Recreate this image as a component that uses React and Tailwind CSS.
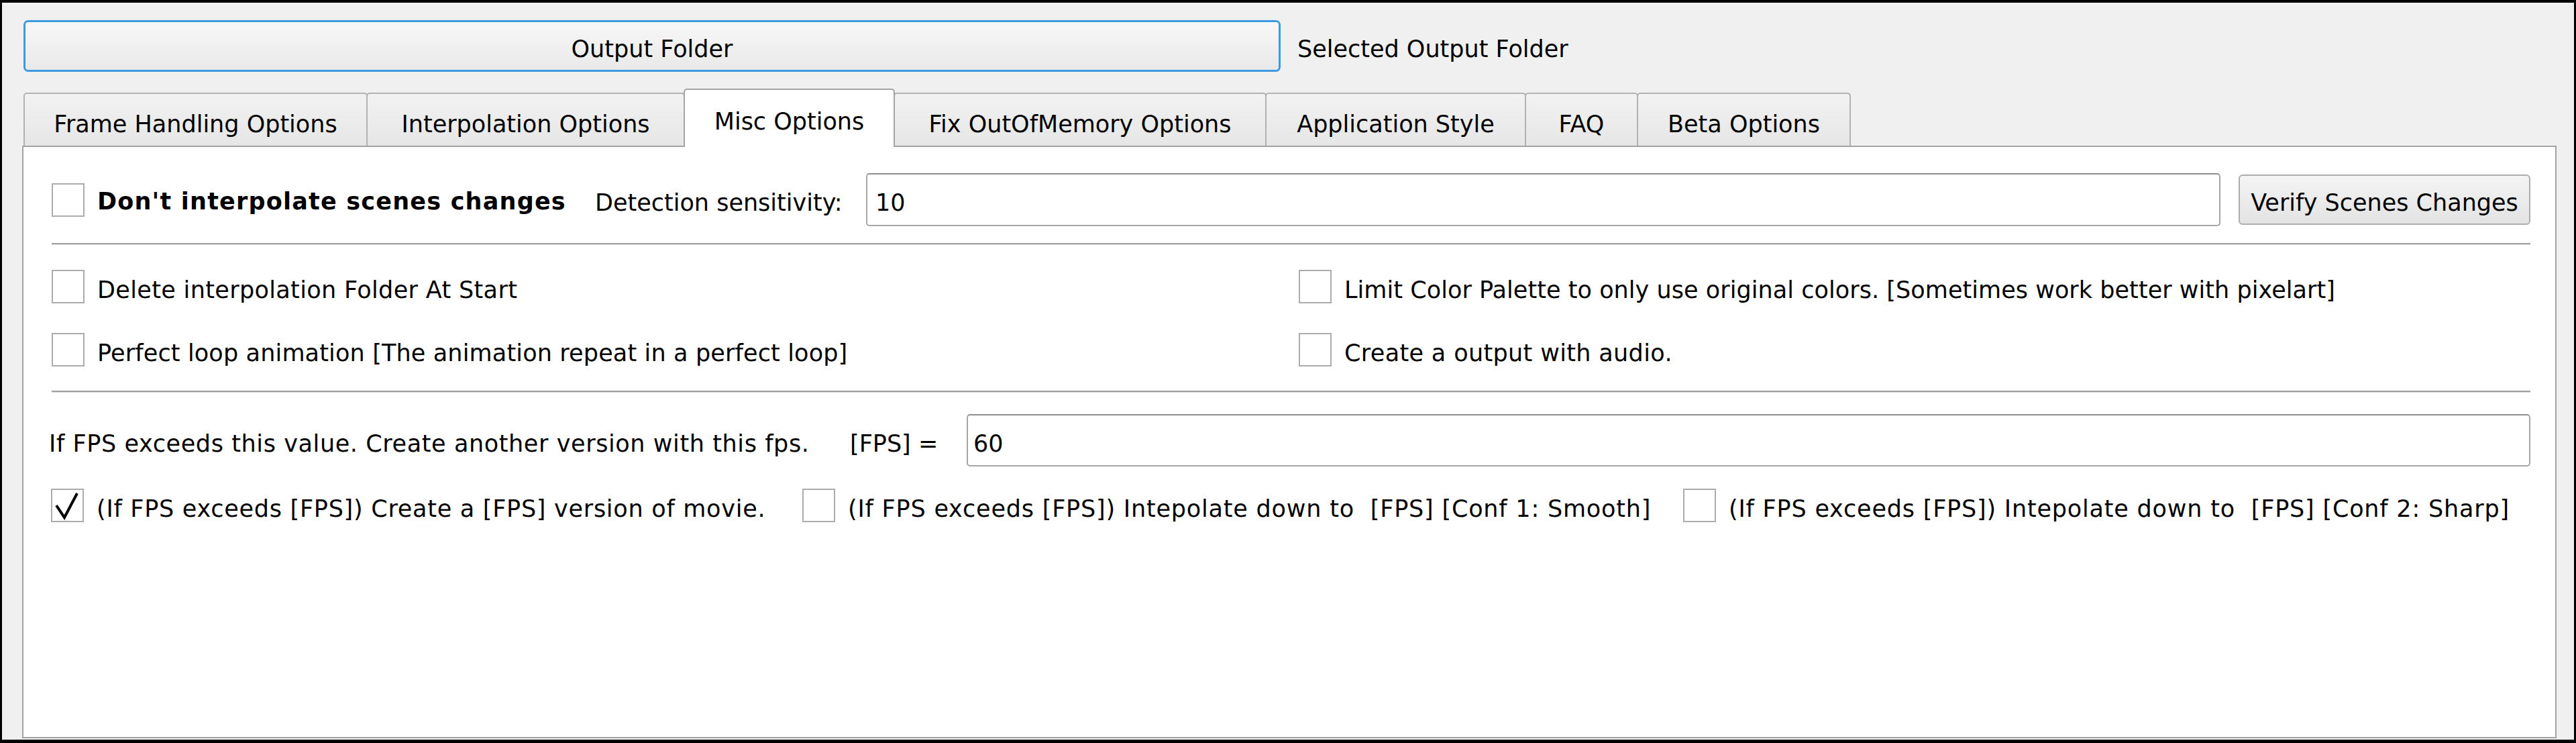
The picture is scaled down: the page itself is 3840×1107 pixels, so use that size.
import React from "react";

function Box({ checked }) {
  return (
    <span className="w-[49px] h-[50px] shrink-0 border-2 border-[#acacac] bg-white flex">
      {checked && (
        <svg width="45" height="46" viewBox="0 0 45 46">
          <path d="M6 23 L18 41 L37 5" fill="none" stroke="#000" strokeWidth="4" strokeLinejoin="miter" />
        </svg>
      )}
    </span>
  );
}

function T({ children, className = "" }) {
  return <span className={"pt-[10px] whitespace-pre " + className}>{children}</span>;
}

function Check({ label, checked, className = "", textClass = "tracking-[0.35px]" }) {
  return (
    <div className={"flex items-center h-[50px] " + className}>
      <Box checked={checked} />
      <T className={"ml-[19px] " + textClass}>{label}</T>
    </div>
  );
}

function Sep() {
  return <div className="h-[3px] border-t-2 border-b border-t-[#a2a2a2] border-b-[#dcdcdc]" />;
}

const tabs = [
  { label: "Frame Handling Options", w: "w-[513px]" },
  { label: "Interpolation Options", w: "w-[475px] -ml-[2px]" },
  { label: "Misc Options", w: "w-[315px] -ml-[2px]", sel: true },
  { label: "Fix OutOfMemory Options", w: "w-[556px] -ml-[2px]" },
  { label: "Application Style", w: "w-[389px] -ml-[2px]" },
  { label: "FAQ", w: "w-[169px] -ml-[2px]" },
  { label: "Beta Options", w: "w-[319px] -ml-[2px]" },
];

export default function App() {
  return (
    <div className="w-[3840px] h-[1107px] bg-black pt-[4px] pl-[3px] pr-[3px] pb-[5px] font-['DejaVu_Sans',sans-serif] text-[35px] text-black leading-none">
      <div className="h-full bg-[#f0f0f0] flex flex-col">
        {/* top row */}
        <div className="flex items-center mt-[26px] pl-[32px] h-[77px] shrink-0">
          <button className="w-[1874px] h-[77px] rounded-[7px] border-[3px] border-[#3d9be4] bg-linear-to-b from-[#f7f7f7] to-[#e9e9e9] flex items-center justify-center">
            <T className="pt-[6px]">Output Folder</T>
          </button>
          <T className="ml-[25px] pt-[6px]">Selected Output Folder</T>
        </div>

        {/* tab widget */}
        <div className="mt-[25px] pl-[30px] pr-[26px] pb-[2px] flex-1 flex flex-col">
          <div className="flex items-end h-[85px] pl-[2px] shrink-0">
            {tabs.map((t) =>
              t.sel ? (
                <div
                  key={t.label}
                  className={t.w + " relative z-10 h-[87px] -mb-[2px] bg-white border-2 border-b-0 border-[#a5a5a5] rounded-t-[5px] flex items-center justify-center"}
                >
                  <T className="pt-[8px]">{t.label}</T>
                </div>
              ) : (
                <div
                  key={t.label}
                  className={t.w + " h-[79px] bg-linear-to-b from-[#f2f2f2] to-[#e6e6e6] border-2 border-b-0 border-[#b2b2b2] rounded-t-[5px] flex items-center justify-center"}
                >
                  <T className="pt-[14px]">{t.label}</T>
                </div>
              )
            )}
          </div>

          <div className="flex-1 bg-white border-2 border-[#a3a3a3] pt-[39px] pl-[42px] pr-[37px] flex flex-col">
            {/* row 1 */}
            <div className="flex items-center h-[79px]">
              <Box />
              <span className="w-[742px] ml-[19px] pt-[6px] font-bold tracking-[1.2px] whitespace-pre">Don't interpolate scenes changes</span>
              <T className="w-[404px] pt-[8px]">Detection sensitivity:</T>
              <div className="flex-1 h-[79px] bg-white border-2 border-[#a6a6a6] border-t-[#8e8e8e] rounded-[5px] flex items-center px-[12px]">
                <T className="pt-[8px]">10</T>
              </div>
              <button className="ml-[27px] w-[435px] h-[75px] rounded-[6px] border-2 border-[#adadad] bg-linear-to-b from-[#f4f4f4] to-[#e3e3e3] flex items-center justify-center">
                <T className="pt-[8px]">Verify Scenes Changes</T>
              </button>
            </div>

            <div className="mt-[25px]"><Sep /></div>

            <div className="mt-[37px] grid grid-cols-[1859px_1fr] gap-y-[44px]">
              <Check label="Delete interpolation Folder At Start" />
              <Check label="Limit Color Palette to only use original colors. [Sometimes work better with pixelart]" textClass="tracking-[0.05px]" />
              <Check label="Perfect loop animation [The animation repeat in a perfect loop]" textClass="tracking-[0.15px]" />
              <Check label="Create a output with audio." />
            </div>

            <div className="mt-[36px]"><Sep /></div>

            {/* FPS row */}
            <div className="mt-[32px] flex items-center h-[78px] -ml-[4px]">
              <T className="w-[1194px] tracking-[0.6px]">If FPS exceeds this value. Create another version with this fps.</T>
              <T className="w-[174px]">[FPS] =</T>
              <div className="flex-1 h-[78px] bg-white border-2 border-[#a6a6a6] border-t-[#8e8e8e] rounded-[5px] flex items-center px-[8px]">
                <T>60</T>
              </div>
            </div>

            <div className="mt-[33px] flex items-center -ml-[1px]">
              <Check checked className="w-[1120px] shrink-0" textClass="tracking-[0.73px]" label="(If FPS exceeds [FPS]) Create a [FPS] version of movie." />
              <Check className="w-[1313px] shrink-0" textClass="tracking-[0.8px]" label="(If FPS exceeds [FPS]) Intepolate down to  [FPS] [Conf 1: Smooth]" />
              <Check textClass="tracking-[0.8px]" label="(If FPS exceeds [FPS]) Intepolate down to  [FPS] [Conf 2: Sharp]" />
            </div>
          </div>
        </div>
      </div>
    </div>
  );
}
